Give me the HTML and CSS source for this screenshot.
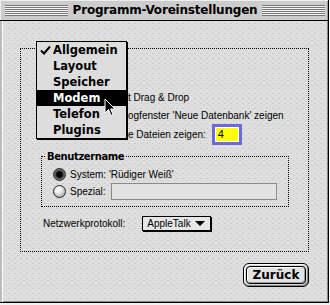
FILE: index.html
```html
<!DOCTYPE html>
<html lang="de">
<head>
<meta charset="utf-8">
<title>Programm-Voreinstellungen</title>
<link rel="stylesheet" href="styles.css">
</head>
<body>
<div class="window">
  <div class="titlebar">
    <div class="stripes"></div>
    <div class="title">Programm-Voreinstellungen</div>
    <div class="stripes"></div>
  </div>
  <div class="content">
    <div class="group">
      <div class="rows">
        <div class="row"><span>t Drag &amp; Drop</span></div>
        <div class="row"><span>ogfenster 'Neue Datenbank' zeigen</span></div>
        <div class="row"><span>e Dateien zeigen:</span><span class="numfield"><span class="numin">4</span></span></div>
      </div>
      <fieldset class="user">
        <legend>Benutzername</legend>
        <div class="radio-row"><span class="radio on"></span><span>System: 'Rüdiger Weiß'</span></div>
        <div class="radio-row"><span class="radio"></span><span class="lbl">Spezial:</span><span class="textfield"></span></div>
      </fieldset>
      <div class="proto">
        <span>Netzwerkprotokoll:</span>
        <span class="popup"><span>AppleTalk</span><span class="tri"></span></span>
      </div>
    </div>
    <div class="buttons">
      <div class="defring"><button class="btn">Zurück</button></div>
    </div>
  </div>
  <ul class="menu">
    <li><svg class="mark" width="11" height="10" viewBox="0 0 11 10"><path d="M1 5.5 L4 8.5 L10 1.5" fill="none" stroke="#000" stroke-width="2"/></svg>Allgemein</li>
    <li>Layout</li>
    <li>Speicher</li>
    <li class="sel">Modem</li>
    <li>Telefon</li>
    <li>Plugins</li>
  </ul>
  <svg class="cursor" width="13" height="20" viewBox="0 0 13 20">
    <path d="M1 1 L1 15 L4.5 11.5 L7 17.5 L9 16.6 L6.6 11 L11 11 Z" fill="#000" stroke="#fff" stroke-width="1" stroke-linejoin="miter"/>
  </svg>
</div>
</body>
</html>
```

FILE: styles.css
```css
html, body {
  margin: 0;
  padding: 0;
  background: #f2f2f2;
}
.window {
  position: relative;
  width: 329px;
  height: 303px;
  box-sizing: border-box;
  border-right: 1px solid #000;
  border-bottom: 1px solid #000;
  background-color: #dddddd;
  display: flex;
  flex-direction: column;
  font-family: "Liberation Sans", Arial, sans-serif;
  font-size: 10px;
  color: #000;
  overflow: hidden;
}
.titlebar {
  height: 21px;
  box-sizing: border-box;
  border-bottom: 1px solid #000;
  background: #cccccc;
  box-shadow: inset 1px 1px 0 #eeeeee, inset -1px 0 0 #999;
  display: flex;
  align-items: center;
  padding: 0 3px 0 5px;
  flex: none;
}
.stripes {
  flex: 1;
  height: 11px;
  margin-top: 1px;
  background: repeating-linear-gradient(to bottom, #777 0 1px, #f4f4f4 1px 2px);
}
.title {
  font-family: "DejaVu Sans", sans-serif;
  font-weight: bold;
  font-size: 12px;
  padding: 0 5px;
  white-space: nowrap;
  letter-spacing: -0.2px;
}
.content {
  flex: 1;
  display: flex;
  flex-direction: column;
  padding: 27px 19px 0 20px;
  background-color: #dedede;
  background-image:
    radial-gradient(circle, #cbcbcb 0.7px, transparent 0.8px),
    radial-gradient(circle, #d2d2d2 0.7px, transparent 0.8px);
  background-size: 6px 5px, 6px 5px;
  background-position: 0 0, 3px 2px;
  box-shadow: inset 2px 0 0 #bbbbbb, inset 3px 0 0 #ffffff, inset -1px -1px 0 #888;
}
.group {
  height: 204px;
  box-sizing: border-box;
  border: 1px dotted #000;
  display: flex;
  flex-direction: column;
}
.rows {
  display: flex;
  flex-direction: column;
  padding: 39px 0 0 107px;
}
.row {
  height: 18px;
  display: flex;
  align-items: center;
  gap: 5px;
  white-space: nowrap;
}
.row:last-child {
  height: 21px;
}
.numfield {
  width: 30px;
  height: 21px;
  box-sizing: border-box;
  border: 3px solid #6a6ad8;
  padding: 1px;
  background: #fff;
  display: flex;
  margin-left: 1px;
}
.numin {
  flex: 1;
  background: #ffff00;
  font-size: 11px;
  line-height: 13px;
  padding-left: 2px;
}
.user {
  margin: 6px 0 0 20px;
  width: 248px;
  box-sizing: border-box;
  border: 1px dotted #000;
  padding: 4px 0 6px 11px;
  display: flex;
  flex-direction: column;
}
.user legend {
  font-family: "DejaVu Sans", sans-serif;
  font-weight: bold;
  font-size: 10px;
  letter-spacing: -0.4px;
  padding: 0 2px;
  margin-left: -8px;
}
.radio-row {
  display: flex;
  align-items: center;
  gap: 4px;
  height: 17px;
  white-space: nowrap;
}
.radio {
  width: 13px;
  height: 13px;
  box-sizing: border-box;
  border-radius: 50%;
  border: 1px solid #222;
  background: radial-gradient(circle at 40% 35%, #ffffff 0, #eeeeee 30%, #aaaaaa 80%, #777 100%);
  flex: none;
}
.radio.on {
  background: radial-gradient(circle at 50% 50%, #000 0, #000 35%, #444 48%, #888 75%, #555 100%);
}
.lbl {
  margin-right: 1px;
}
.textfield {
  width: 166px;
  height: 17px;
  box-sizing: border-box;
  border: 1px solid #8a8a8a;
  background: #e2e2e2;
}
.proto {
  display: flex;
  align-items: center;
  gap: 17px;
  margin: 9px 0 0 22px;
  white-space: nowrap;
}
.popup {
  width: 69px;
  height: 15px;
  box-sizing: border-box;
  border: 1px solid #000;
  box-shadow: 1px 1px 0 #000;
  background: #e6e6e6;
  display: flex;
  align-items: center;
  justify-content: space-between;
  padding: 0 5px 0 4px;
  font-size: 10px;
}
.tri {
  width: 0;
  height: 0;
  border-left: 5px solid transparent;
  border-right: 5px solid transparent;
  border-top: 5px solid #000;
}
.buttons {
  display: flex;
  justify-content: flex-end;
  padding: 11px 0 0 0;
}
.defring {
  width: 66px;
  height: 24px;
  box-sizing: border-box;
  border: 1px solid #000;
  border-radius: 6px;
  background: #d4d4d4;
  box-shadow: inset 1px 1px 0 #fff, inset -1px -1px 0 #888;
  padding: 2px;
  display: flex;
}
.btn {
  flex: 1;
  margin: 0;
  border: 1px solid #000;
  border-radius: 4px;
  background: #e2e2e2;
  box-shadow: inset 1px 1px 0 #fff, inset -1px -1px 0 #999;
  font-family: "DejaVu Sans", sans-serif;
  font-weight: bold;
  font-size: 12px;
  padding: 0;
  color: #000;
}
.menu {
  position: absolute;
  left: 36px;
  top: 41px;
  width: 91px;
  margin: 0;
  padding: 0;
  list-style: none;
  border: 1px solid #000;
  box-shadow: 1px 1px 0 #000;
  background: #dddddd;
  box-sizing: border-box;
  font-family: "DejaVu Sans", sans-serif;
  font-weight: bold;
  font-size: 11.5px;
}
.menu li {
  position: relative;
  height: 16px;
  line-height: 16px;
  padding-left: 16px;
}
.menu li.sel {
  background: #000;
  color: #fff;
}
.mark {
  position: absolute;
  left: 3px;
  top: 3px;
}
.cursor {
  position: absolute;
  left: 104px;
  top: 98px;
}
```
